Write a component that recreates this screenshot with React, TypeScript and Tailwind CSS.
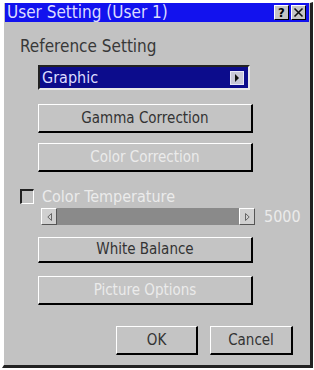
import React from 'react';

const FONT = '[font-family:"DejaVu_Sans",sans-serif] [font-stretch:condensed]';

function Btn({ label, disabled, className = '' }: { label: string; disabled?: boolean; className?: string }) {
  return (
    <div
      className={`flex items-center justify-center bg-[#c4c4c4] border-t border-l border-t-white border-l-white border-b-2 border-r-2 border-b-black border-r-black text-[15px] ${
        disabled ? 'text-[#ebebeb]' : 'text-[#333]'
      } ${className}`}
    >
      {label}
    </div>
  );
}

export default function App() {
  return (
    <div className={`w-[314px] h-[370px] bg-white pt-[2px] pl-[2px] ${FONT}`}>
      <div className="w-[311px] h-[366px] bg-[#c2c2c2] border-l-2 border-t border-l-white border-t-white border-r-[3px] border-b-[3px] border-r-[#222] border-b-[#222] flex flex-col">
        {/* Title bar */}
        <div className="mx-[1px] h-[19px] bg-[#1212ee] flex items-center pl-[2px] pr-[3px]">
          <span className="text-[17px] text-[#dcdcff] leading-none">User Setting (User 1)</span>
          <div className="ml-auto flex gap-[2px]">
            <div className="w-[15px] h-[15px] bg-[#c4c4c4] border-t border-l border-t-white border-l-white border-b border-r border-b-black border-r-black flex items-center justify-center text-[13px] font-bold leading-none text-black">?</div>
            <div className="w-[15px] h-[15px] bg-[#c4c4c4] border-t border-l border-t-white border-l-white border-b border-r border-b-black border-r-black flex items-center justify-center">
              <svg width="11" height="11" viewBox="0 0 11 11">
                <path d="M1.5 1.5 L9.5 9.5 M9.5 1.5 L1.5 9.5" stroke="#111" strokeWidth="1.6" />
              </svg>
            </div>
          </div>
        </div>

        <div className="pl-[16px] mt-[16px] text-[17px] text-[#383838] leading-none">Reference Setting</div>

        {/* Dropdown */}
        <div className="ml-[34px] mt-[10px] w-[212px] h-[25px] bg-[#0c0c8c] border-t-2 border-l-2 border-t-[#222] border-l-[#222] border-b-2 border-r-2 border-b-[#e8e8e8] border-r-[#e8e8e8] flex items-center pl-[2px] pr-[4px]">
          <span className="text-[16px] text-[#dcdcff] leading-none">Graphic</span>
          <div className="ml-auto w-[14px] h-[14px] bg-[#c8c8d8] border border-[#e8e8f8] flex items-center justify-center">
            <svg width="6" height="8" viewBox="0 0 6 8"><path d="M1 0 L5 4 L1 8 Z" fill="#111" /></svg>
          </div>
        </div>

        <Btn label="Gamma Correction" className="ml-[34px] mt-[14px] w-[215px] h-[29px]" />
        <Btn label="Color Correction" disabled className="ml-[34px] mt-[10px] w-[215px] h-[29px]" />

        {/* Color temperature */}
        <div className="flex items-center ml-[16px] mt-[17px] h-[15px]">
          <div className="w-[14px] h-[15px] border-t-2 border-l-2 border-t-[#222] border-l-[#222] border-b border-r border-b-white border-r-white bg-[#c2c2c2]" />
          <span className="ml-[8px] text-[16px] text-[#ebebeb] leading-none">Color Temperature</span>
        </div>
        <div className="flex items-center ml-[37px] mt-[4px] h-[17px]">
          <div className="w-[214px] h-[17px] bg-[#8a8a8a] flex justify-between">
            <div className="w-[16px] h-[17px] bg-[#d0d0d0] border-t border-l border-t-white border-l-white border-b border-r border-b-[#555] border-r-[#555] flex items-center justify-center">
              <svg width="5" height="8" viewBox="0 0 5 8"><path d="M4.5 0.5 L0.8 4 L4.5 7.5 Z" fill="none" stroke="#666" /></svg>
            </div>
            <div className="w-[16px] h-[17px] bg-[#d0d0d0] border-t border-l border-t-white border-l-white border-b border-r border-b-[#555] border-r-[#555] flex items-center justify-center">
              <svg width="5" height="8" viewBox="0 0 5 8"><path d="M0.5 0.5 L4.2 4 L0.5 7.5 Z" fill="none" stroke="#666" /></svg>
            </div>
          </div>
          <span className="ml-[9px] text-[16px] text-[#ebebeb] leading-none">5000</span>
        </div>

        <Btn label="White Balance" className="ml-[34px] mt-[12px] w-[215px] h-[26px]" />
        <Btn label="Picture Options" disabled className="ml-[34px] mt-[13px] w-[215px] h-[29px]" />

        <div className="flex ml-[112px] mt-[21px] gap-[12px]">
          <Btn label="OK" className="w-[82px] h-[29px]" />
          <Btn label="Cancel" className="w-[83px] h-[29px]" />
        </div>
      </div>
    </div>
  );
}
